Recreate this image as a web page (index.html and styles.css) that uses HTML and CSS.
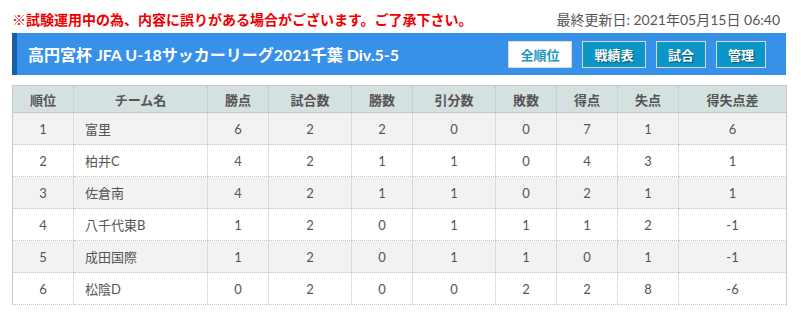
FILE: index.html
```html
<!DOCTYPE html>
<html lang="ja">
<head>
<meta charset="utf-8">
<link rel="stylesheet" href="styles.css">
</head>
<body>
<div class="page">
  <div class="topline">
    <span class="notice">※試験運用中の為、内容に誤りがある場合がございます。ご了承下さい。</span>
    <span class="updated">最終更新日: 2021年05月15日 06:40</span>
  </div>
  <div class="titlebar">
    <h1 class="title">高円宮杯 JFA U-18サッカーリーグ2021千葉 Div.5-5</h1>
    <div class="btns">
      <span class="btn btn-active">全順位</span>
      <span class="btn">戦績表</span>
      <span class="btn">試合</span>
      <span class="btn">管理</span>
    </div>
  </div>
  <table class="standings">
    <colgroup>
      <col style="width:61px"><col style="width:134px"><col style="width:61px"><col style="width:83px"><col style="width:61px"><col style="width:83px"><col style="width:61px"><col style="width:61px"><col style="width:61px"><col style="width:108px">
    </colgroup>
    <thead>
      <tr><th>順位</th><th>チーム名</th><th>勝点</th><th>試合数</th><th>勝数</th><th>引分数</th><th>敗数</th><th>得点</th><th>失点</th><th>得失点差</th></tr>
    </thead>
    <tbody>
      <tr><td>1</td><td class="team">富里</td><td>6</td><td>2</td><td>2</td><td>0</td><td>0</td><td>7</td><td>1</td><td>6</td></tr>
      <tr><td>2</td><td class="team">柏井C</td><td>4</td><td>2</td><td>1</td><td>1</td><td>0</td><td>4</td><td>3</td><td>1</td></tr>
      <tr><td>3</td><td class="team">佐倉南</td><td>4</td><td>2</td><td>1</td><td>1</td><td>0</td><td>2</td><td>1</td><td>1</td></tr>
      <tr><td>4</td><td class="team">八千代東B</td><td>1</td><td>2</td><td>0</td><td>1</td><td>1</td><td>1</td><td>2</td><td>-1</td></tr>
      <tr><td>5</td><td class="team">成田国際</td><td>1</td><td>2</td><td>0</td><td>1</td><td>1</td><td>0</td><td>1</td><td>-1</td></tr>
      <tr><td>6</td><td class="team">松陰D</td><td>0</td><td>2</td><td>0</td><td>0</td><td>2</td><td>2</td><td>8</td><td>-6</td></tr>
    </tbody>
  </table>
</div>
</body>
</html>
```
FILE: styles.css
```css
* { box-sizing: border-box; }
html, body { margin: 0; padding: 0; background: #fff; }
body {
  font-family: Lato, "Noto Sans CJK JP", sans-serif;
  color: #555;
}
.page {
  width: 774px;
  margin-left: 12px;
}
.topline {
  display: flex;
  justify-content: space-between;
  align-items: center;
  height: 33px;
  padding-top: 4px;
  padding-right: 6px;
}
.notice {
  color: #ee0000;
  font-weight: bold;
  font-size: 14px;
}
.updated {
  color: #555;
  font-size: 14px;
}
.titlebar {
  display: flex;
  align-items: center;
  justify-content: space-between;
  height: 42px;
  background: #3891e8;
  border-left: 5px solid #1a5ca6;
  padding: 0 20px 0 11px;
}
.title {
  margin: 0;
  color: #fff;
  font-size: 16px;
  font-weight: bold;
}
.btns {
  display: flex;
  gap: 10px;
  padding-top: 1px;
}
.btn {
  display: inline-flex;
  align-items: center;
  justify-content: center;
  height: 27px;
  width: 50px;
  border: 1px solid #d8d8d8;
  background: #0a96c6;
  color: #fff;
  font-size: 13px;
  font-weight: bold;
  text-shadow: 1px 1px 1px rgba(0,0,0,0.45);
}
.btn:nth-child(1), .btn:nth-child(2) { width: 64px; }
.btn-active {
  background: #fff;
  color: #1b97c6;
  text-shadow: none;
}
.standings {
  margin-top: 10px;
  width: 774px;
  border-collapse: collapse;
  table-layout: fixed;
  border-left: 1px solid #c8c8c8;
  border-right: 1px solid #c8c8c8;
  border-top: 1px solid #c8c8c8;
  font-size: 13px;
}
.standings th {
  background: #d5e0e0;
  height: 27px;
  font-weight: bold;
  color: #555;
  border-left: 1px dotted #c4c4c4;
  border-bottom: 1px solid #c8c8c8;
  padding: 0;
}
.standings td {
  height: 32px;
  text-align: center;
  border-left: 1px dotted #c4c4c4;
  border-bottom: 1px dotted #c4c4c4;
  padding: 0;
  color: #555;
}
.standings td.team {
  text-align: left;
  padding-left: 11px;
}
.standings tbody tr:nth-child(odd) td { background: #f2f2f2; }
```
